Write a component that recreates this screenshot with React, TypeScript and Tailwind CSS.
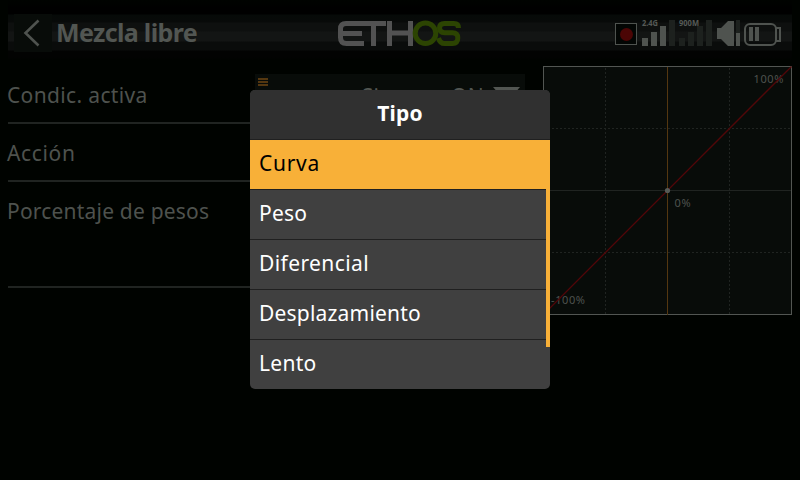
import React from "react";

const MENU = [
  { label: "Curva", spacing: "tracking-[0.7px]" },
  { label: "Peso", spacing: "tracking-[0.2px]" },
  { label: "Diferencial", spacing: "tracking-[0.4px]" },
  { label: "Desplazamiento", spacing: "tracking-[0.2px]" },
  { label: "Lento", spacing: "tracking-[0.3px]" },
];

function Header() {
  return (
    <header className="mx-2 flex h-[66px] shrink-0 items-start">
      <div className="flex h-[60px] w-full items-start bg-[linear-gradient(to_bottom,#000300_0px,#000000_8px,#000000_14px,#060a08_15px,#080a09_22px,#0e100f_23px,#0e100f_31px,#131514_32px,#131514_41px,#0a0c0b_42px,#0a0c0b_50px,#020302_51px,#020302_57px,#000300_60px)]">
        <div className="ml-[6px] mt-[14px] h-[38px] w-[38px] bg-[#080c09]">
          <svg width="38" height="38" viewBox="0 0 38 38" fill="none">
            <path d="M24.5 6.5L11.5 19L24.5 31.5" stroke="#4f534f" strokeWidth="2.6" />
          </svg>
        </div>
        <h1 className="ml-1 mt-[14px] w-[282px] whitespace-nowrap text-[25px] font-bold leading-[36px] tracking-[-0.65px] text-[#525652]">
          Mezcla libre
        </h1>
        <Logo />
        <div className="flex-1" />
        <Status />
      </div>
    </header>
  );
}

function Logo() {
  return (
    <svg className="mt-5 shrink-0" width="124" height="27" viewBox="338 20 124 27" fill="none" strokeWidth="5">
      <g stroke="#525252">
        <path d="M386 23.500H346Q340.500 23.500 340.500 29V37.500Q340.500 43.500 346.500 43.500H364M341 33.500H362" />
        <path d="M373.500 23V46M389.500 21V46M410.500 21V46M389 33H411" />
      </g>
      <g stroke="#2c4402">
        <circle cx="425.500" cy="33.300" r="10.300" />
        <path d="M458.500 28Q458.500 23.500 454 23.500H444.500Q439.500 23.500 439.500 28T444.500 32.700H452.500Q457.800 32.700 457.800 38T452.500 43.500H444.500Q440 43.500 438.500 38" />
      </g>
    </svg>
  );
}

function Status() {
  return (
    <svg className="mt-[18px] shrink-0" width="178" height="30" viewBox="614 18 178 30">
      <rect x="615.500" y="23.500" width="21" height="21" fill="#030604" stroke="#4f534f" />
      <circle cx="626.500" cy="34.500" r="6.500" fill="#4b0505" />
      <g fill="#4f534f">
        <rect x="642" y="38" width="6" height="8" />
        <rect x="651" y="32" width="6" height="14" />
        <rect x="660" y="26" width="6" height="20" />
        <path d="M717 28H721L728 21H734V46H728L721 39H717Z" />
        <rect x="736" y="33" width="4" height="13" />
        <rect x="749" y="27" width="4" height="14" />
        <rect x="755" y="27" width="4" height="14" />
      </g>
      <g fill="#1d211e">
        <rect x="669" y="20" width="6" height="26" />
        <rect x="679" y="38" width="6" height="8" />
        <rect x="688" y="32" width="6" height="14" />
        <rect x="697" y="26" width="6" height="20" />
        <rect x="706" y="20" width="6" height="26" />
        <rect x="736" y="20" width="4" height="13" />
      </g>
      <g fill="none" stroke="#4f534f" strokeWidth="2">
        <rect x="745" y="24" width="31" height="21" rx="5" />
        <path d="M776 28H780V41H776" />
      </g>
      <g fill="#565a56" fontSize="8" fontWeight="700">
        <text x="642" y="26" textLength="16" lengthAdjust="spacingAndGlyphs">2.4G</text>
        <text x="679" y="26" textLength="20" lengthAdjust="spacingAndGlyphs">900M</text>
      </g>
    </svg>
  );
}

function Row({ label, spacing, tall, children }: { label: string; spacing: string; tall?: boolean; children?: React.ReactNode }) {
  return (
    <div className={`flex items-start border-b-2 border-[#202421] ${tall ? "h-[106px]" : "h-[58px]"}`}>
      <div className={`-ml-px mr-px mt-[14px] w-[247px] shrink-0 whitespace-nowrap text-[21px] leading-[30px] text-[#4e524e] ${spacing}`}>
        {label}
      </div>
      {children}
    </div>
  );
}

function Chart() {
  return (
    <svg className="shrink-0" width="249" height="249" viewBox="543 66 249 249" fill="none">
      <rect x="543.500" y="66.500" width="248" height="248" fill="#080c09" stroke="#525652" />
      <g stroke="#202421" strokeDasharray="2 2">
        <path d="M605.500 68V314M729.500 68V314M544 128.500H791M544 252.500H791" />
      </g>
      <path d="M544 190.500H791" stroke="#202421" />
      <path d="M667.500 67V315" stroke="#543710" />
      <g fill="#4e524e" fontSize="11" letterSpacing="0.6">
        <text x="753.500" y="83">100%</text>
        <text x="674.500" y="207">0%</text>
        <text x="551" y="304">-100%</text>
      </g>
      <path d="M543.500 314.500L791.500 66.500" stroke="#510608" strokeWidth="1.300" />
      <circle cx="667.500" cy="190.500" r="2.600" fill="#565a56" />
    </svg>
  );
}

function TypeDialog() {
  return (
    <div className="absolute left-[250px] top-[90px] h-[299px] w-[300px] overflow-hidden rounded-[5px] bg-[#404040]">
      <h2 className="h-[50px] border-b border-[#202020] bg-[#303030] text-center text-[21px] font-bold leading-[46px] tracking-[0.2px] text-white">
        Tipo
      </h2>
      <ul>
        {MENU.map((item, i) => (
          <li
            key={item.label}
            className={`h-[50px] border-b border-[#202020] pl-[9px] text-[21px] leading-[46px] ${item.spacing} ${
              i === 0 ? "bg-[#f8b038] text-black" : "text-white"
            }`}
          >
            {item.label}
          </li>
        ))}
      </ul>
      <div className="absolute right-0 top-[99px] h-[158px] w-1 bg-[#f8b038]" />
    </div>
  );
}

export default function App() {
  return (
    <div className="relative flex h-[480px] w-[800px] flex-col overflow-hidden bg-[#000300] font-['Noto_Sans',sans-serif]">
      <Header />
      <main className="flex items-start justify-between px-2">
        <section className="w-[517px]">
          <Row label="Condic. activa" spacing="tracking-[0.35px]">
            <div className="mt-2 flex h-[44px] w-[270px] items-center bg-[#080c09]">
              <svg className="mb-7 ml-[3px]" width="10" height="9" viewBox="0 0 10 9" fill="#543710">
                <path d="M0 0H10V2H0ZM0 3H10V5H0ZM0 6H10V8H0Z" />
              </svg>
              <span className="ml-auto mr-[9px] whitespace-nowrap text-[21px] leading-[44px] tracking-[0.3px] text-[#525652]">
                Siempre ON
              </span>
              <svg className="mr-[5px]" width="27" height="18" viewBox="0 0 27 18">
                <path d="M0 0H27L13.500 16Z" fill="#525652" />
              </svg>
            </div>
          </Row>
          <Row label="Acción" spacing="tracking-[0.65px]" />
          <Row label="Porcentaje de pesos" spacing="tracking-[0.2px]" tall />
        </section>
        <Chart />
      </main>
      <TypeDialog />
    </div>
  );
}
